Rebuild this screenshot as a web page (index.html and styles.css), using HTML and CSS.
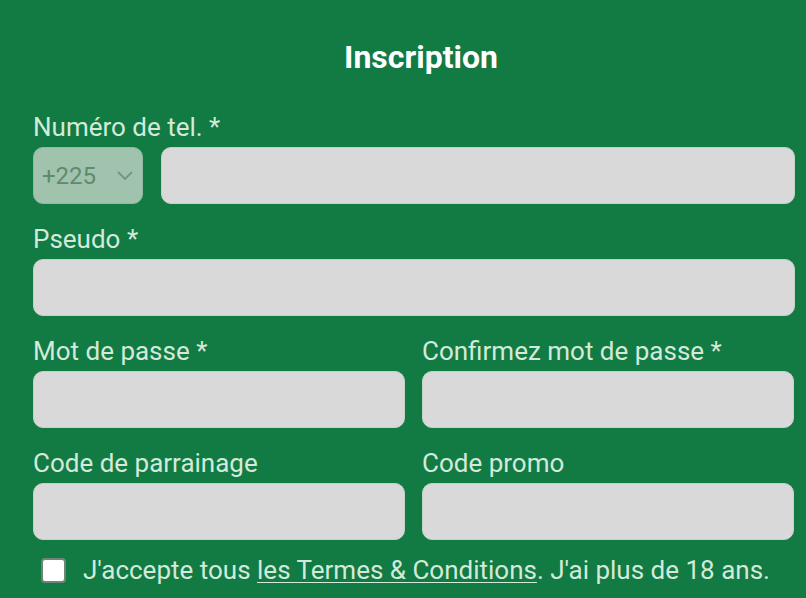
FILE: index.html
```html
<!DOCTYPE html>
<html lang="fr">
<head>
    <meta charset="UTF-8">
    <meta name="viewport" content="width=device-width, initial-scale=1.0">
    <title>Inscription</title>
    <link rel="stylesheet" href="styles.css">
</head>
<body>
    <div class="signup">
        <h1 class="title">Inscription</h1>

        <div class="field">
            <label class="label">Numéro de tel. *</label>
            <div class="phone-row">
                <div class="prefix">
                    <span>+225</span>
                    <svg class="chevron" width="18" height="12" viewBox="0 0 18 12">
                        <path d="M2 2 L9 9 L16 2" fill="none" stroke="#6f9580" stroke-width="1.8"/>
                    </svg>
                </div>
                <input class="input" type="tel">
            </div>
        </div>

        <div class="field">
            <label class="label">Pseudo *</label>
            <input class="input" type="text">
        </div>

        <div class="two-cols">
            <div class="field">
                <label class="label">Mot de passe *</label>
                <input class="input" type="password">
            </div>
            <div class="field">
                <label class="label">Confirmez mot de passe *</label>
                <input class="input" type="password">
            </div>
        </div>

        <div class="two-cols">
            <div class="field">
                <label class="label">Code de parrainage</label>
                <input class="input" type="text">
            </div>
            <div class="field">
                <label class="label">Code promo</label>
                <input class="input" type="text">
            </div>
        </div>

        <div class="terms">
            <span class="box"></span>
            <span>J'accepte tous <a href="#">les Termes &amp; Conditions</a>. J'ai plus de 18 ans.</span>
        </div>
    </div>
</body>
</html>
```

FILE: styles.css
```css
* {
  box-sizing: border-box;
  margin: 0;
  padding: 0;
}
body {
  background-color: #127a43;
  font-family: Roboto, "Liberation Sans", sans-serif;
  overflow: hidden;
}

.signup {
  padding: 37px 11px 0 33px;
  width: 806px;
}

.title {
  color: white;
  font-size: 32px;
  font-weight: 700;
  line-height: 40px;
  text-align: center;
  padding-left: 14px;
  margin-bottom: 36px;
}

.field {
  display: flex;
  flex-direction: column;
  margin-bottom: 21px;
}
.label {
  color: #d3eadb;
  font-size: 26px;
  line-height: 28px;
  margin-bottom: 6px;
  white-space: nowrap;
}

.input {
  height: 57px;
  width: 100%;
  background-color: #d9d9d9;
  border: 1px solid #c3d3c8;
  border-radius: 10px;
  outline: none;
}

.phone-row {
  display: flex;
  gap: 18px;
}
.prefix {
  flex: 0 0 110px;
  height: 57px;
  background-color: #a1c3ae;
  border: 1px solid #93b9a2;
  border-radius: 10px;
  display: flex;
  align-items: center;
  justify-content: space-between;
  padding: 0 8px 0 8px;
  color: #5f8a70;
  font-size: 24px;
}

.two-cols {
  display: grid;
  grid-template-columns: 372px 372px;
  gap: 17px;
}

.terms {
  display: flex;
  align-items: center;
  gap: 17px;
  padding-left: 8px;
  margin-top: -5px;
  color: #d3eadb;
  font-size: 26px;
  line-height: 28px;
  white-space: nowrap;
}
.terms a {
  color: #d3eadb;
  text-decoration: underline;
  text-underline-offset: 3px;
  text-decoration-thickness: 1px;
}
.box {
  width: 25px;
  height: 25px;
  background-color: white;
  border: 2px solid #6e8577;
  border-radius: 4px;
  flex-shrink: 0;
}
```
